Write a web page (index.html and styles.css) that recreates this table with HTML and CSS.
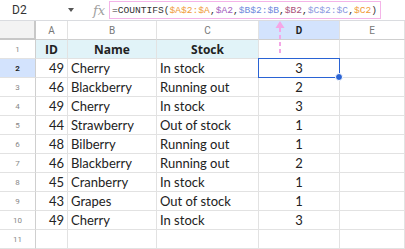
FILE: index.html
```html
<!DOCTYPE html>
<html>
<head>
<meta charset="utf-8">
<link rel="stylesheet" href="styles.css">
</head>
<body>
<div class="app">
  <div class="fbar">
    <div class="namebox"><span class="ref">D2</span><span class="caret"></span></div>
    <div class="fx">fx</div>
    <div class="formula">=COUNTIFS(<span class="c1">$A$2:$A</span>,<span class="c2">$A2</span>,<span class="c3">$B$2:$B</span>,<span class="c4">$B2</span>,<span class="c5">$C$2:$C</span>,<span class="c6">$C2</span>)</div>
  </div>
  <div class="sheet">
    <div class="corner"></div>
    <div class="ch">A</div><div class="ch">B</div><div class="ch">C</div><div class="ch sel">D</div><div class="ch">E</div>

    <div class="rh">1</div><div class="c hd">ID</div><div class="c hd">Name</div><div class="c hd">Stock</div><div class="c"></div><div class="c"></div>

    <div class="rh sel">2</div><div class="c num">49</div><div class="c">Cherry</div><div class="c">In stock</div><div class="c mid active">3<span class="handle"></span></div><div class="c"></div>
    <div class="rh">3</div><div class="c num">46</div><div class="c">Blackberry</div><div class="c">Running out</div><div class="c mid">2</div><div class="c"></div>
    <div class="rh">4</div><div class="c num">49</div><div class="c">Cherry</div><div class="c">In stock</div><div class="c mid">3</div><div class="c"></div>
    <div class="rh">5</div><div class="c num">44</div><div class="c">Strawberry</div><div class="c">Out of stock</div><div class="c mid">1</div><div class="c"></div>
    <div class="rh">6</div><div class="c num">48</div><div class="c">Bilberry</div><div class="c">Running out</div><div class="c mid">1</div><div class="c"></div>
    <div class="rh">7</div><div class="c num">46</div><div class="c">Blackberry</div><div class="c">Running out</div><div class="c mid">2</div><div class="c"></div>
    <div class="rh">8</div><div class="c num">45</div><div class="c">Cranberry</div><div class="c">In stock</div><div class="c mid">1</div><div class="c"></div>
    <div class="rh">9</div><div class="c num">43</div><div class="c">Grapes</div><div class="c">Out of stock</div><div class="c mid">1</div><div class="c"></div>
    <div class="rh">10</div><div class="c num">49</div><div class="c">Cherry</div><div class="c">In stock</div><div class="c mid">3</div><div class="c"></div>
    <div class="rh">11</div><div class="c"></div><div class="c"></div><div class="c"></div><div class="c"></div><div class="c"></div>
  </div>
  <svg class="arrow" width="12" height="36" viewBox="0 0 12 36">
    <path d="M6 1 L1.5 8 L10.5 8 Z" fill="#f4a6e6"/>
    <line x1="6" y1="8" x2="6" y2="35" stroke="#f4a6e6" stroke-width="2" stroke-dasharray="4 3"/>
  </svg>
</div>
</body>
</html>
```
FILE: styles.css
```css
* { box-sizing: border-box; }
html, body { margin: 0; padding: 0; background: #fff; }
body { width: 405px; height: 249px; overflow: hidden; font-family: Lato, "Open Sans", sans-serif; color: #222; }
.app { position: relative; }

.fbar { height: 21px; display: flex; align-items: center; border-bottom: 1px solid #dadce0; }
.namebox { width: 88px; display: flex; align-items: center; padding-left: 12px; font-family: Roboto, "Liberation Sans", sans-serif; font-size: 12px; color: #333; }
.namebox .ref { flex: 1; }
.caret { width: 0; height: 0; border-left: 3.5px solid transparent; border-right: 3.5px solid transparent; border-top: 4px solid #555; margin-right: 14px; }
.fx { width: 21px; font-family: "DejaVu Serif", serif; font-style: italic; font-size: 13px; color: #a0a0a0; padding-left: 5px; line-height: 1; }
.formula { width: 272px; height: 18px; border: 1px solid #f4b4e8; display: flex; align-items: center; padding-left: 2px; font-family: "Liberation Mono", monospace; font-size: 9.6px; color: #333; white-space: nowrap; }
.c1 { color: #ef9a36; }
.c2 { color: #a35dbd; }
.c3 { color: #6d88dc; }
.c4 { color: #a8507a; }
.c5 { color: #8a98e0; }
.c6 { color: #ef9a36; }

.sheet { display: grid; grid-template-columns: 36px 32px 89px 102px 81px 65px; grid-auto-rows: 19px; }
.sheet > div { border-right: 1px solid #e2e2e2; border-bottom: 1px solid #e2e2e2; display: flex; align-items: center; white-space: nowrap; overflow: hidden; }
.corner { background: #f3f3f3; border-right: 2px solid #c8c8c8 !important; border-bottom: 2px solid #c8c8c8 !important; }
.ch { justify-content: center; font-family: Roboto, "Liberation Sans", sans-serif; font-size: 10px; color: #777; border-bottom-color: #cfcfcf !important; }
.ch.sel { background: #d3e3fd; color: #1f1f1f; font-weight: 700; }
.rh { justify-content: center; font-family: Roboto, "Liberation Sans", sans-serif; font-size: 8px; color: #888; border-right-color: #cfcfcf !important; }
.rh.sel { background: #d3e3fd; color: #1f1f1f; font-weight: 700; }

.c { font-size: 13px; padding: 0 3px; color: #222; }
.c.hd { background: #e1f3f8; justify-content: center; font-weight: 700; font-family: "Open Sans", sans-serif; font-size: 12px; }
.c.num { justify-content: flex-end; }
.c.mid { justify-content: center; }
.c.active { position: relative; overflow: visible !important; }
.c.active::after { content: ""; position: absolute; left: -1px; top: -1px; right: -1px; bottom: -1px; border: 1.5px solid #2a63d4; }
.handle { position: absolute; right: -4px; bottom: -4px; width: 8px; height: 8px; border-radius: 50%; background: #2a63d4; border: 1px solid #fff; z-index: 2; }

.arrow { position: absolute; left: 274px; top: 20px; }
```
